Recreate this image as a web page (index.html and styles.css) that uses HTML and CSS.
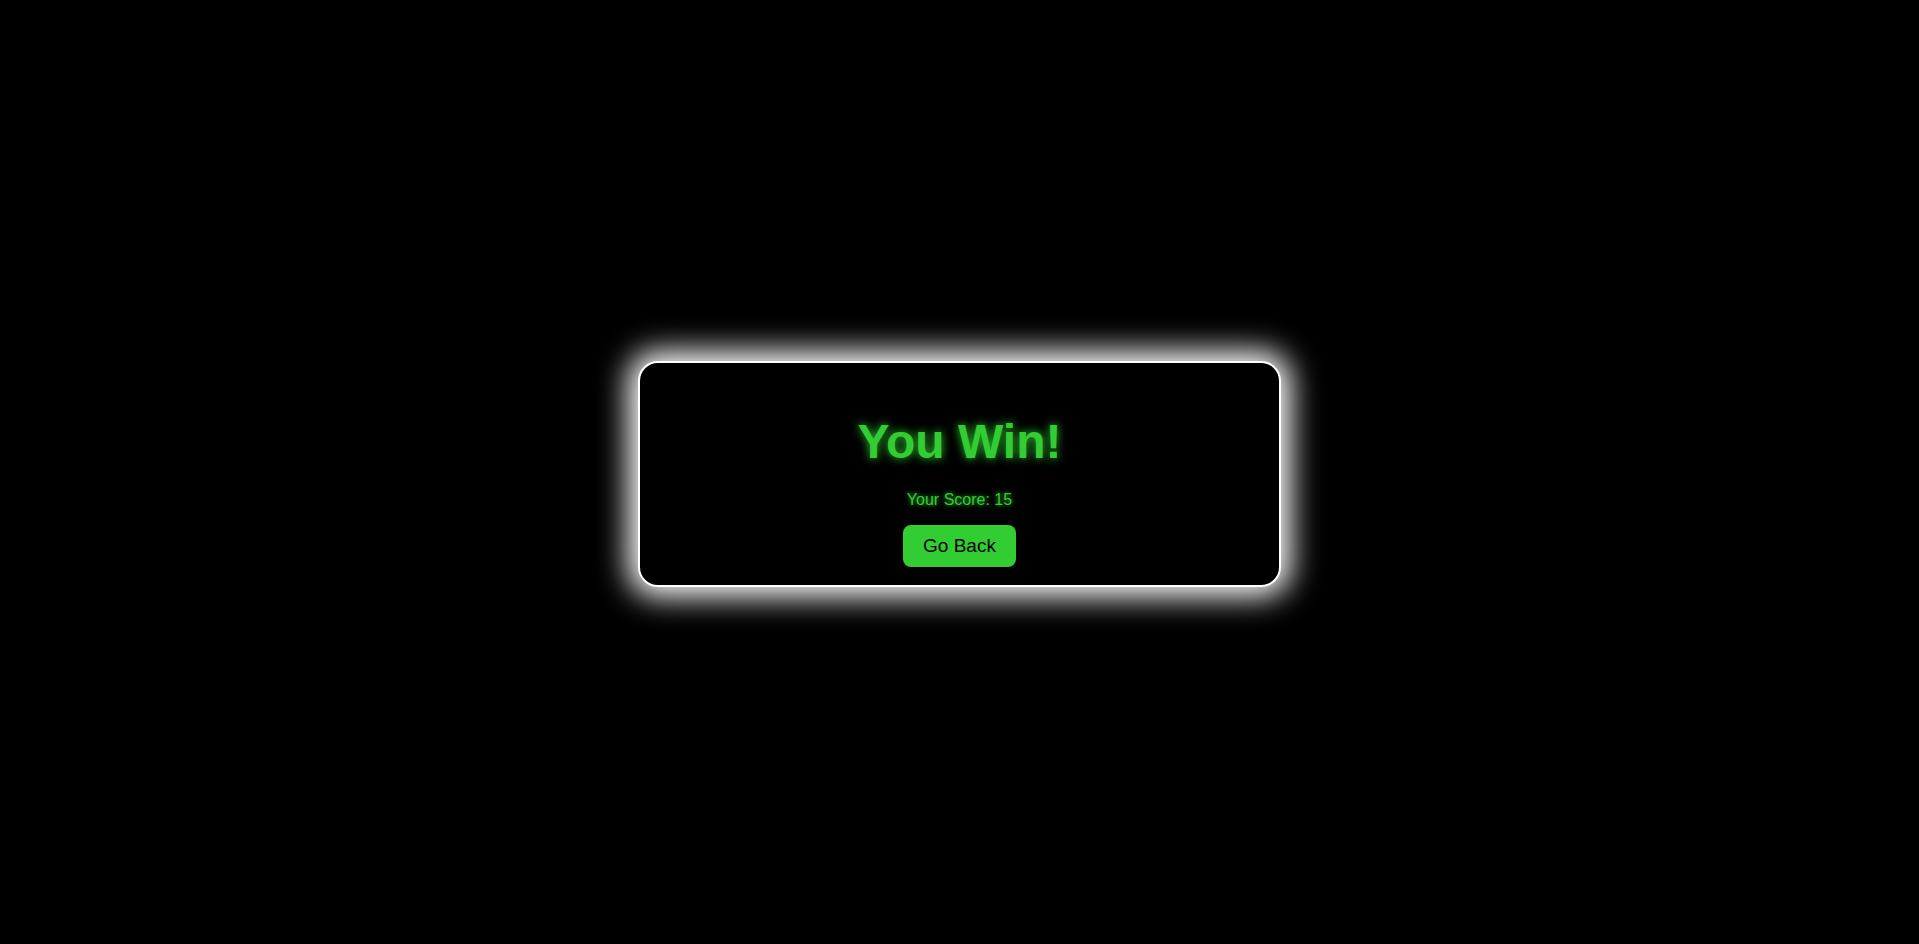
FILE: index.html
```html
<!DOCTYPE html>
<html lang="en">
<head>
<meta charset="utf-8">
<title>You Win!</title>
<link rel="stylesheet" href="styles.css">
</head>
<body>
<main class="screen">
  <section class="card">
    <h1 class="title">You Win!</h1>
    <p class="score">Your Score: 15</p>
    <button class="back-btn" type="button">Go Back</button>
  </section>
</main>
</body>
</html>
```
FILE: styles.css
```css
html, body {
  margin: 0;
  padding: 0;
  background: #000;
  height: 100%;
}
body {
  font-family: "Liberation Sans", Arial, sans-serif;
}
.screen {
  box-sizing: border-box;
  height: 100vh;
  padding-top: 3px;
  display: flex;
  align-items: center;
  justify-content: center;
}
.card {
  width: 599px;
  padding: 20px 20px 18px;
  border: 2px solid #fff;
  border-radius: 20px;
  background: #000;
  box-shadow: 0 0 30px 10px #fff;
  display: flex;
  flex-direction: column;
  align-items: center;
}
.title {
  margin: 31px 0 22px;
  font-size: 48px;
  font-weight: bold;
  color: #32cd32;
  text-shadow: 0 0 10px #32cd32;
  line-height: normal;
}
.score {
  margin: 0 0 16px;
  font-size: 16px;
  color: #32cd32;
  text-shadow: 0 0 5px #32cd32;
}
.back-btn {
  font-family: "Liberation Sans", Arial, sans-serif;
  font-size: 19px;
  padding: 10px 20px;
  border: none;
  border-radius: 8px;
  background: #32cd32;
  color: #000;
  cursor: pointer;
}
```
